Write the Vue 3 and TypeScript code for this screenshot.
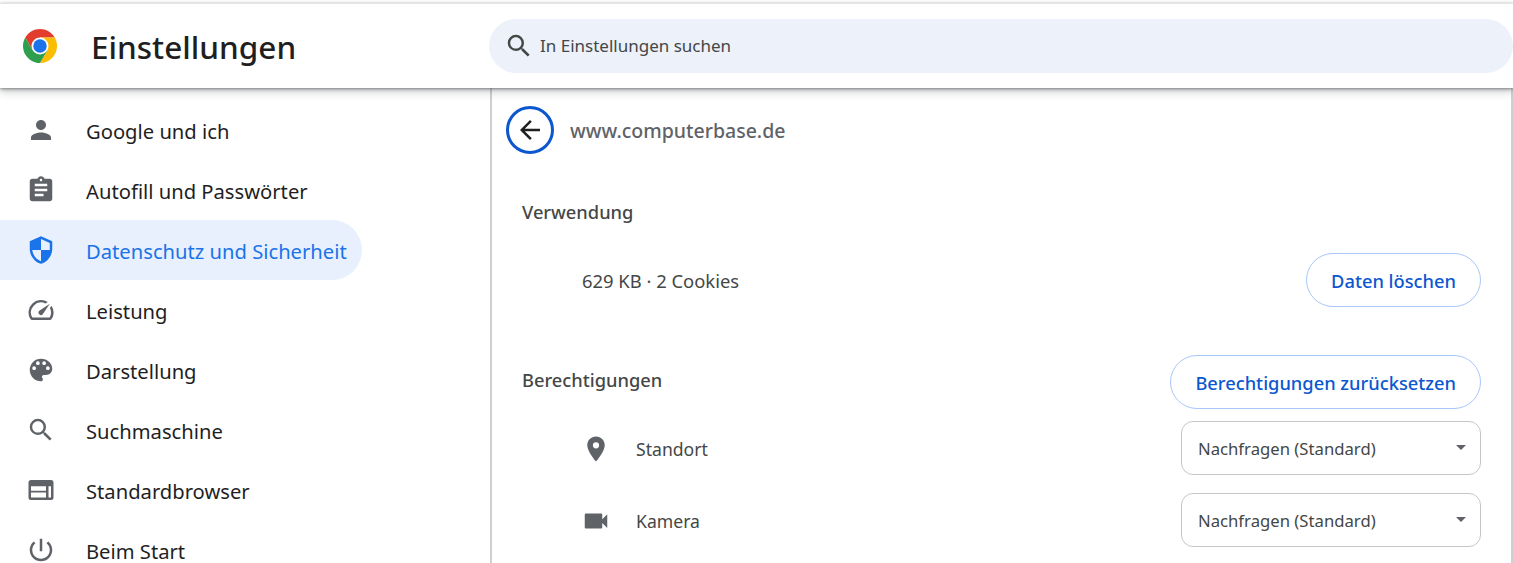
<script setup lang="ts">
interface NavItem { label: string; path: string; active?: boolean }
const nav: NavItem[] = [
  { label: 'Google und ich', path: 'M12 12c2.21 0 4-1.79 4-4s-1.79-4-4-4-4 1.79-4 4 1.79 4 4 4zm0 2c-2.67 0-8 1.34-8 4v2h16v-2c0-2.66-5.33-4-8-4z' },
  { label: 'Autofill und Passwörter', path: 'M19 3h-4.18C14.4 1.84 13.3 1 12 1c-1.3 0-2.4.84-2.82 2H5c-1.1 0-2 .9-2 2v14c0 1.1.9 2 2 2h14c1.1 0 2-.9 2-2V5c0-1.1-.9-2-2-2zm-7 0c.55 0 1 .45 1 1s-.45 1-1 1-1-.45-1-1 .45-1 1-1zm2 14H7v-2h7v2zm3-4H7v-2h10v2zm0-4H7V7h10v2z' },
  { label: 'Datenschutz und Sicherheit', active: true, path: 'M12 1L3 5v6c0 5.55 3.84 10.74 9 12 5.16-1.26 9-6.45 9-12V5l-9-4zm0 11V3.19l7 3.11V12h-7zm0 0v8.93c-3.72-1.15-6.47-4.82-7-8.93h7z' },
  { label: 'Leistung', path: 'M20.38 8.57l-1.23 1.85a8 8 0 0 1-.22 7.58H5.07A8 8 0 0 1 15.58 6.85l1.85-1.23A10 10 0 0 0 3.35 19a2 2 0 0 0 1.72 1h13.85a2 2 0 0 0 1.74-1 10 10 0 0 0-.27-10.44zM10.59 15.41a2 2 0 0 0 2.83 0l5.66-8.49-8.49 5.66a2 2 0 0 0 0 2.83z' },
  { label: 'Darstellung', path: 'M12 3a9 9 0 0 0 0 18c.83 0 1.5-.67 1.5-1.5 0-.39-.15-.74-.39-1.01-.23-.26-.38-.61-.38-.99 0-.83.67-1.5 1.5-1.5H16c2.76 0 5-2.24 5-5 0-4.42-4.03-8-9-8zm-5.5 9a1.5 1.5 0 1 1 0-3 1.5 1.5 0 0 1 0 3zm3-4a1.5 1.5 0 1 1 0-3 1.5 1.5 0 0 1 0 3zm5 0a1.5 1.5 0 1 1 0-3 1.5 1.5 0 0 1 0 3zm3 4a1.5 1.5 0 1 1 0-3 1.5 1.5 0 0 1 0 3z' },
  { label: 'Suchmaschine', path: 'M15.5 14h-.79l-.28-.27A6.47 6.47 0 0 0 16 9.5 6.5 6.5 0 1 0 9.5 16c1.61 0 3.09-.59 4.23-1.57l.27.28v.79l5 4.99L20.49 19l-4.99-5zm-6 0C7.01 14 5 11.99 5 9.5S7.01 5 9.5 5 14 7.01 14 9.5 11.99 14 9.5 14z' },
  { label: 'Standardbrowser', path: 'M22 6a2 2 0 0 0-2-2H4a2 2 0 0 0-2 2v12a2 2 0 0 0 2 2h16a2 2 0 0 0 2-2V6zM4 9h12v3.5H4V9zm0 5h12v4H4v-4zm14 4V9h2v9h-2z' },
  { label: 'Beim Start', path: 'M13 3h-2v10h2V3zm4.83 2.17l-1.42 1.42A6.92 6.92 0 0 1 19 12c0 3.87-3.13 7-7 7s-7-3.13-7-7c0-2.22 1.03-4.2 2.58-5.42L6.17 5.17A8.93 8.93 0 0 0 3 12a9 9 0 0 0 18 0c0-2.74-1.23-5.18-3.17-6.83z' },
]
const perms = [
  { label: 'Standort', path: 'M12 2C8.13 2 5 5.13 5 9c0 5.25 7 13 7 13s7-7.75 7-13c0-3.87-3.13-7-7-7zm0 9.5a2.5 2.5 0 0 1 0-5 2.5 2.5 0 0 1 0 5z' },
  { label: 'Kamera', path: 'M17 10.5V7c0-.55-.45-1-1-1H4c-.55 0-1 .45-1 1v10c0 .55.45 1 1 1h12c.55 0 1-.45 1-1v-3.5l4 4v-11l-4 4z' },
]
</script>

<template>
  <div class="page">
    <header class="header">
      <div class="brand">
        <svg class="logo" viewBox="0 0 48 48">
          <path d="M44.78 12A24 24 0 0 0 3.22 12L13.6 30 24 12z" fill="#e33b2e" />
          <path d="M44.78 12A24 24 0 0 1 24 48L34.4 30 24 12z" fill="#fbbc04" />
          <path d="M24 48A24 24 0 0 1 3.22 12L13.6 30H34.4z" fill="#2f9e4f" />
          <circle cx="24" cy="24" r="12" fill="#fff" />
          <circle cx="24" cy="24" r="9.5" fill="#1a73e8" />
        </svg>
        <h1 class="title">Einstellungen</h1>
      </div>
      <div class="search">
        <svg class="search-icon" viewBox="0 0 24 24"><path :d="nav[5].path" /></svg>
        <span class="search-text">In Einstellungen suchen</span>
      </div>
    </header>

    <div class="body">
      <nav class="sidebar">
        <a v-for="item in nav" :key="item.label" class="nav-item" :class="{ active: item.active }">
          <svg class="nav-icon" viewBox="0 0 24 24"><path :d="item.path" /></svg>
          <span class="nav-text">{{ item.label }}</span>
        </a>
      </nav>

      <main class="card">
        <div class="site-head">
          <button class="back" type="button" aria-label="Zurück">
            <svg viewBox="0 0 24 24"><path d="M20 11H7.83l5.59-5.59L12 4l-8 8 8 8 1.41-1.41L7.83 13H20v-2z" /></svg>
          </button>
          <span class="site">www.computerbase.de</span>
        </div>

        <h2 class="section first">Verwendung</h2>
        <div class="usage">
          <span>629 KB · 2 Cookies</span>
          <button class="pill" type="button">Daten löschen</button>
        </div>

        <div class="perm-head">
          <h2 class="section">Berechtigungen</h2>
          <button class="pill" type="button">Berechtigungen zurücksetzen</button>
        </div>

        <div class="perms">
          <div v-for="p in perms" :key="p.label" class="perm">
            <svg class="perm-icon" viewBox="0 0 24 24"><path :d="p.path" /></svg>
            <span class="perm-label">{{ p.label }}</span>
            <div class="select">
              <span>Nachfragen (Standard)</span>
              <i class="caret"></i>
            </div>
          </div>
        </div>
      </main>
    </div>
  </div>
</template>

<style scoped>
.page {
  width: 1513px;
  height: 563px;
  overflow: hidden;
  background: #fff;
  display: flex;
  flex-direction: column;
  font-family: "Noto Sans", "Open Sans", sans-serif;
  color: #1f1f1f;
}
.header {
  flex: none;
  height: 85px;
  margin-top: 3px;
  border-top: 1px solid #e4e4e4;
  box-sizing: border-box;
  display: flex;
  align-items: center;
  background: #fff;
  box-shadow: 0 1px 3px rgba(60, 64, 67, 0.6), 0 4px 8px rgba(60, 64, 67, 0.25);
  position: relative;
  z-index: 2;
}
.brand {
  width: 489px;
  flex: none;
  display: flex;
  align-items: center;
  padding-left: 23px;
  box-sizing: border-box;
}
.logo {
  width: 34px;
  height: 34px;
}
.title {
  margin: 1px 0 0 34px;
  font-size: 31.5px;
  font-weight: 500;
  color: #1f1f1f;
}
.search {
  width: 1024px;
  height: 54px;
  flex: none;
  display: flex;
  align-items: center;
  border-radius: 27px;
  background: #ecf1fa;
  font-size: 17px;
  color: #444746;
  padding-left: 15px;
  box-sizing: border-box;
}
.search-text {
  margin-top: -2px;
}
.search-icon {
  width: 30px;
  height: 30px;
  margin-right: 6px;
  fill: #444746;
}
.body {
  flex: 1;
  min-height: 0;
  display: flex;
}
.sidebar {
  width: 490px;
  flex: none;
  padding-top: 12px;
  box-sizing: border-box;
  display: flex;
  flex-direction: column;
}
.nav-item {
  flex: none;
  height: 60px;
  width: 362px;
  display: flex;
  align-items: center;
  box-sizing: border-box;
  padding-left: 26px;
  border-radius: 0 30px 30px 0;
  font-size: 20.2px;
  color: #1f1f1f;
}
.nav-text {
  margin-top: 2px;
}
.nav-icon {
  width: 30px;
  height: 30px;
  margin-right: 30px;
  fill: #5f6368;
}
.nav-item.active {
  background: #e8f0fe;
  color: #1a73e8;
}
.nav-item.active .nav-icon {
  fill: #1a73e8;
}
.card {
  width: 1023px;
  flex: none;
  box-sizing: border-box;
  border-left: 2px solid #cfcfcf;
  border-right: 2px solid #cfcfcf;
  padding: 18px 30px 0 14px;
  color: #444746;
}
.site-head {
  display: flex;
  align-items: center;
  height: 48px;
}
.back {
  width: 48px;
  height: 48px;
  padding: 0;
  flex: none;
  border: 3px solid #0b57d0;
  border-radius: 50%;
  background: #fff;
  display: flex;
  align-items: center;
  justify-content: center;
}
.back svg {
  width: 30px;
  height: 30px;
  fill: #1f1f1f;
}
.site {
  margin-left: 16px;
  font-size: 19.5px;
  font-weight: 500;
  color: #5f6368;
}
.section {
  margin: 0;
  font-size: 18.3px;
  font-weight: 500;
  color: #444746;
}
.section.first {
  margin: 43px 0 0 16px;
  line-height: 30px;
}
.usage {
  display: flex;
  align-items: center;
  justify-content: space-between;
  margin-top: 26px;
  padding-left: 76px;
  font-size: 18.4px;
}
.pill {
  height: 54px;
  padding: 0 24px;
  border: 1px solid #a8c7fa;
  border-radius: 27px;
  background: #fff;
  color: #0b57d0;
  font-family: inherit;
  font-size: 18.3px;
  font-weight: 500;
}
.perm-head {
  display: flex;
  align-items: center;
  justify-content: space-between;
  margin-top: 48px;
  padding-left: 16px;
}
.perm-head .section {
  margin-bottom: 5px;
}
.perms {
  margin-top: 12px;
  display: flex;
  flex-direction: column;
  gap: 18px;
}
.perm {
  display: flex;
  align-items: center;
  height: 54px;
  padding-left: 75px;
}
.perm-icon {
  width: 30px;
  height: 30px;
  fill: #5f6368;
  margin-right: 25px;
  margin-top: 2px;
}
.perm-label {
  flex: 1;
  font-size: 17.6px;
  margin-top: 2px;
}
.select {
  width: 300px;
  height: 54px;
  box-sizing: border-box;
  border: 1px solid #c4c7c5;
  border-radius: 12px;
  display: flex;
  align-items: center;
  justify-content: space-between;
  padding: 0 14px 0 16px;
  font-size: 16.7px;
}
.caret {
  width: 0;
  height: 0;
  border-left: 5.5px solid transparent;
  border-right: 5.5px solid transparent;
  border-top: 5px solid #5f6368;
  margin-top: -1px;
}
</style>

<style>
html, body { margin: 0; overflow: hidden; background: #fff; }
</style>
